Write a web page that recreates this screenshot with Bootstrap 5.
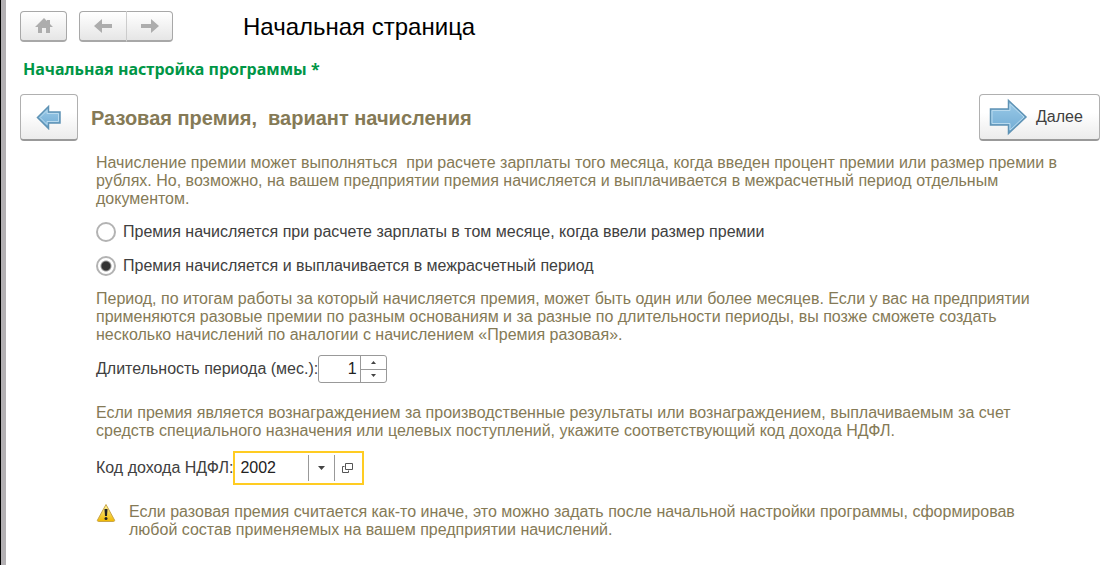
<!DOCTYPE html>
<html lang="ru">
<head>
<meta charset="utf-8">
<meta name="viewport" content="width=device-width, initial-scale=1">
<title>Начальная страница</title>
<link rel="stylesheet" href="https://cdn.jsdelivr.net/npm/bootstrap@5.3.0/dist/css/bootstrap.min.css">
<style>
body{font-family:"Liberation Sans",Arial,sans-serif;font-size:16px;line-height:18px;color:#404040;background:#fff}
.frame{border-left:1px solid #000;min-height:100vh}
.rail{border-left:5px solid #b3b0b3;min-height:100vh;padding:11px 8px 16px 14px}
.tool{border:1px solid #a8a8a8;border-bottom-width:2px;border-radius:4px;background:linear-gradient(#fff,#e6e6e6);padding:0}
.tool-nav{width:47px;height:31px}
.tool-nav+.tool-nav{border-left-color:#ccc}
.btn-group .tool-nav:first-child{border-right-width:0}
.app-title{font-size:24px;line-height:30px;color:#000;margin-left:70px}
.section-name{font-family:"Noto Sans",Verdana,sans-serif;font-weight:700;font-size:16px;line-height:22px;color:#009646;margin:16px 0 14px 3px}
.step{height:47px;color:#404040;background:linear-gradient(#fff 40%,#ececec);border-color:#b0b0b0 #b0b0b0 #999}
.step-back{width:58px}
.step-next{width:121px;line-height:18px}
.step-title{font-size:20px;line-height:24px;font-weight:700;color:#857a56;margin-left:13px}
.content{padding-left:76px}
.hint{color:#857a56;margin:0}
.lead-in{padding-top:13px}
.choice{gap:7px;height:20px;margin-top:14px}
.choice input{appearance:none;width:20px;height:20px;margin:0;border:2px solid #b3b3b3;border-radius:50%;background:#fff}
.choice input:checked{background:radial-gradient(circle,#333 4px,#fff 6px)}
.choice+.hint{margin-top:14px}
.field{margin-top:11px}
.field+.hint{margin-top:21px}
.field+.note{margin-top:18px}
.spin{width:69px;height:28px;border:1px solid #999;border-radius:3px}
.spin input,.code-box input{border:0;outline:0;background:transparent;padding:0;color:#222;min-width:0}
.spin input{width:41px;text-align:right;padding-right:3px}
.spin-keys{width:27px;border-left:1px solid #999}
.spin-keys button,.code-box button{border:0;background:none;padding:0;display:flex;align-items:center;justify-content:center}
.spin-keys button{flex:1}
.spin-keys button+button{border-top:1px solid #999}
.code-box{width:131px;height:34px;border:2px solid #fc2;padding:2px 0}
.code-box input{width:73px;padding-left:5px}
.code-box button{width:26px;border-left:1px solid #999}
.note svg{margin-right:13px}
svg{display:block}
</style>
</head>
<body>
<div class="frame"><main class="rail">
<header class="d-flex align-items-center">
<button class="tool tool-nav d-flex align-items-center justify-content-center" type="button" aria-label="Домой"><svg width="20" height="18" viewBox="0 0 20 18" fill="#adadad"><path d="M10 1 1 10h3v6h4v-5h4v5h4v-6h3l-3-3V3h-3v1z"/></svg></button>
<div class="btn-group ms-2 ps-1" role="group" aria-label="Навигация">
<button class="tool tool-nav rounded-end-0 d-flex align-items-center justify-content-center" type="button" aria-label="Назад"><svg width="18" height="14" viewBox="0 0 18 14" fill="#adadad"><path d="M0 7 8 0v5h10v4H8v5z"/></svg></button>
<button class="tool tool-nav rounded-start-0 d-flex align-items-center justify-content-center" type="button" aria-label="Вперёд"><svg width="18" height="14" viewBox="0 0 18 14" fill="#adadad"><path d="m18 7-8-7v5H0v4h10v5z"/></svg></button>
</div>
<h1 class="app-title fw-normal mb-0">Начальная страница</h1>
</header>
<p class="section-name">Начальная настройка программы *</p>
<div class="d-flex align-items-center">
<button class="tool step step-back d-flex align-items-center justify-content-center" type="button" aria-label="Предыдущий шаг"><svg width="26" height="26" viewBox="0 0 26 26"><defs><linearGradient id="blue" x2="0" y2="1"><stop stop-color="#9ccbe8"/><stop offset="1" stop-color="#6faad3"/></linearGradient></defs><path d="M1.500 13.500 12.500 2.500V8H24v11H12.500v5.500z" fill="url(#blue)" stroke="#5f93b5" stroke-width="1.500"/><path d="m4 13.500 7-7v3h11.500v8H11v3z" fill="none" stroke="#b9daee"/></svg></button>
<h2 class="step-title mb-0 flex-grow-1">Разовая премия,&nbsp; вариант начисления</h2>
<button class="tool step step-next d-flex align-items-center" type="button"><svg class="ms-2 me-2" width="40" height="38" viewBox="0 0 40 38"><path d="M2.500 11h18V2.500L38 19 20.500 35.500V27h-18z" fill="url(#blue)" stroke="#5f93b5" stroke-width="1.500"/><path d="M4 12.500h18V6l14 13-14 13v-6.500H4z" fill="none" stroke="#b9daee"/></svg>Далее</button>
</div>
<div class="content">
<p class="hint lead-in">Начисление премии может выполняться&nbsp; при расчете зарплаты того месяца, когда введен процент премии или размер премии в<br>рублях. Но, возможно, на вашем предприятии премия начисляется и выплачивается в межрасчетный период отдельным<br>документом.</p>
<label class="choice d-flex align-items-center"><input type="radio" name="mode">Премия начисляется при расчете зарплаты в том месяце, когда ввели размер премии</label>
<label class="choice d-flex align-items-center"><input type="radio" name="mode" checked>Премия начисляется и выплачивается в межрасчетный период</label>
<p class="hint">Период, по итогам работы за который начисляется премия, может быть один или более месяцев. Если у вас на предприятии<br>применяются разовые премии по разным основаниям и за разные по длительности периоды, вы позже сможете создать<br>несколько начислений по аналогии с начислением «Премия разовая».</p>
<div class="field d-flex align-items-center"><label for="len">Длительность периода (мес.):</label>
<div class="spin d-flex"><input id="len" type="text" value="1"><div class="spin-keys d-flex flex-column"><button type="button" aria-label="Больше"><svg width="5" height="3"><path d="M0 3 2.500 0 5 3z" fill="#444"/></svg></button><button type="button" aria-label="Меньше"><svg width="5" height="3"><path d="m0 0 2.500 3L5 0z" fill="#444"/></svg></button></div></div></div>
<p class="hint">Если премия является вознаграждением за производственные результаты или вознаграждением, выплачиваемым за счет<br>средств специального назначения или целевых поступлений, укажите соответствующий код дохода НДФЛ.</p>
<div class="field d-flex align-items-center"><label for="code">Код дохода НДФЛ:</label>
<div class="code-box d-flex"><input id="code" type="text" value="2002"><button type="button" aria-label="Выбрать"><svg width="7" height="4"><path d="m0 0 3.500 4L7 0z" fill="#444"/></svg></button><button type="button" aria-label="Открыть"><svg width="12" height="12" fill="none" stroke="#555"><path d="M3.500 1.500h7v6h-7zM2.500 4.500h-2v6h6v-2"/></svg></button></div></div>
<div class="note d-flex"><svg class="flex-shrink-0" width="20" height="20" viewBox="0 0 20 20"><defs><linearGradient id="warn" x2="0" y2="1"><stop stop-color="#fff6a0"/><stop offset="1" stop-color="#f0b800"/></linearGradient></defs><path d="M10 1.500 18.500 17a1 1 0 0 1-1 1.500h-15a1 1 0 0 1-1-1.500z" fill="url(#warn)" stroke="#c9a54a"/><path d="M8.500 6h3l-.5 7H9z" fill="#222"/><circle cx="10" cy="15.500" r="1.500" fill="#222"/></svg>
<p class="hint">Если разовая премия считается как-то иначе, это можно задать после начальной настройки программы, сформировав<br>любой состав применяемых на вашем предприятии начислений.</p></div>
</div>
</main></div>
<script src="https://cdn.jsdelivr.net/npm/bootstrap@5.3.0/dist/js/bootstrap.bundle.min.js"></script>
</body>
</html>
